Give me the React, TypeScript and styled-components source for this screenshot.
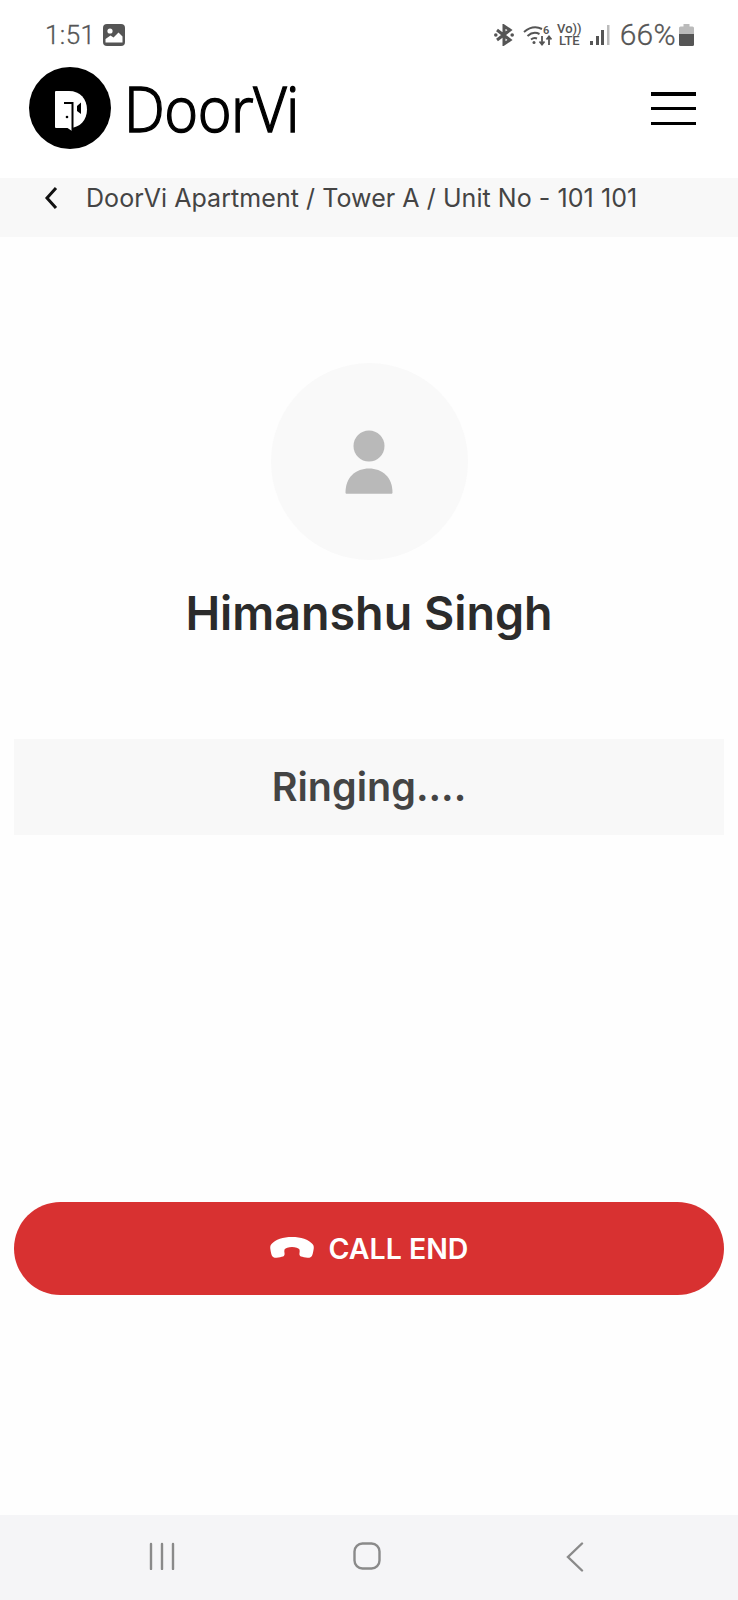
import React from "react";
import styled, { createGlobalStyle } from "styled-components";

const GlobalStyle = createGlobalStyle`
  html, body {
    margin: 0;
    padding: 0;
    background: #fefefe;
  }
  * {
    box-sizing: border-box;
  }
`;

const Screen = styled.div`
  width: 738px;
  height: 1600px;
  display: flex;
  flex-direction: column;
  font-family: Inter, "Liberation Sans", sans-serif;
  background: #fefefe;
`;

const StatusBar = styled.div`
  height: 66px;
  padding: 21px 44px 0 45px;
  display: flex;
  justify-content: space-between;
  align-items: flex-start;
  background: #fff;
  color: #555;
  font-family: Roboto, sans-serif;
`;

const StatusGroup = styled.div`
  display: flex;
  align-items: center;
  height: 28px;
`;

const StatusTime = styled.span`
  font-size: 26px;
  font-weight: 300;
  letter-spacing: 0.4px;
  line-height: 28px;
  margin-right: 8px;
  -webkit-text-stroke: 0.3px #555;
`;

const Battery = styled.span`
  font-size: 30px;
  font-weight: 300;
  line-height: 28px;
  margin: 0 3px 0 10px;
  letter-spacing: 0.3px;
  -webkit-text-stroke: 0.3px #555;
`;

const VoLte = styled.span`
  display: flex;
  flex-direction: column;
  align-items: center;
  margin: 0 8px 0 5px;
  font-size: 13px;
  font-weight: 500;
  line-height: 12px;
  color: #555;
`;

const StatusSpacer = styled.span`
  width: 9px;
`;

const Header = styled.header`
  height: 112px;
  padding: 1px 42px 0 29px;
  display: flex;
  justify-content: space-between;
  align-items: flex-start;
  background: #fff;
`;

const Brand = styled.div`
  display: flex;
  align-items: center;
  gap: 13px;
  height: 82px;
`;

const BrandName = styled.span`
  display: inline-block;
  font-family: "Noto Sans", sans-serif;
  font-size: 63px;
  font-weight: 300;
  line-height: 80px;
  color: #000;
  letter-spacing: -0.5px;
  transform: scaleX(0.91);
  transform-origin: left center;
  -webkit-text-stroke: 1.3px #000;
`;

const MenuButton = styled.button`
  margin-top: 25px;
  padding: 0;
  width: 45px;
  height: 33px;
  border: 0;
  background: none;
  display: flex;
  flex-direction: column;
  justify-content: space-between;
`;

const MenuLine = styled.span`
  display: block;
  height: 3.5px;
  background: #000;
`;

const Breadcrumb = styled.nav`
  height: 59px;
  padding: 3px 0 0 44px;
  display: flex;
  align-items: flex-start;
  gap: 28px;
  background: #f8f8f8;
  color: #444;
  font-size: 25px;
  letter-spacing: 0.06px;
  line-height: 34px;
`;

const BackIcon = styled.svg`
  flex: none;
  margin-top: 5px;
`;

const Main = styled.main`
  flex: 1;
  display: flex;
  flex-direction: column;
  align-items: center;
  padding: 126px 14px 0;
`;

const Avatar = styled.div`
  width: 197px;
  height: 197px;
  border-radius: 50%;
  background: #f9f9f9;
  display: flex;
  align-items: center;
  justify-content: center;
`;

const Name = styled.h1`
  margin: 22px 0 0;
  font-size: 46.6px;
  font-weight: 600;
  line-height: 62px;
  color: #2b2b2b;
`;

const CallStatus = styled.div`
  width: 100%;
  height: 96px;
  margin-top: 95px;
  display: flex;
  align-items: center;
  justify-content: center;
  background: #f8f8f8;
  color: #444;
  font-size: 39.5px;
  font-weight: 600;
`;

const EndButton = styled.button`
  width: 100%;
  height: 93px;
  margin-top: 367px;
  border: 0;
  border-radius: 47px;
  display: flex;
  align-items: center;
  justify-content: center;
  gap: 15px;
  background: #d83131;
  color: #fff;
  font-family: inherit;
  font-size: 28.5px;
  font-weight: 600;
`;

const NavBar = styled.div`
  height: 85px;
  padding: 27px 0 0;
  display: flex;
  justify-content: center;
  align-items: flex-start;
  background: #f5f5f7;
`;

const NavSlot = styled.div<{ $width: number }>`
  width: ${(p) => p.$width}px;
  height: 30px;
  display: flex;
  justify-content: center;
`;

const GalleryIcon = () => (
  <svg width="22" height="22" viewBox="0 0 22 22">
    <rect width="22" height="22" rx="4" fill="#555" />
    <circle cx="7" cy="7" r="2.6" fill="#fff" />
    <path d="M2.5 18.5V15l5-3.5 3 2 5-5 4 4v6z" fill="#fff" />
  </svg>
);

const BluetoothIcon = () => (
  <svg width="20" height="22" viewBox="0 0 20 22" fill="none" stroke="#555" strokeWidth="3">
    <path d="M3 6l13 10-6 4V2l6 4L3 16" />
    <circle cx="1.800" cy="11" r="1.800" fill="#555" stroke="none" />
    <circle cx="18.200" cy="11" r="1.800" fill="#555" stroke="none" />
  </svg>
);

const WifiIcon = () => (
  <svg width="29" height="22" viewBox="0 0 29 22" fill="none" stroke="#555">
    <path d="M1 8c6-5 12-6 18-3" strokeWidth="2" />
    <path d="M4.500 12c4-3.500 8-4 12-2" strokeWidth="2" />
    <path d="M8 15.500c2-1.500 4-1.800 6-1" strokeWidth="2" />
    <circle cx="11" cy="18.500" r="1.500" fill="#555" stroke="none" />
    <path d="M19 12v8M16.500 17.500l2.500 3 2.500-3" strokeWidth="1.800" />
    <path d="M26 21v-8M23.500 15.500l2.500-3 2.500 3" strokeWidth="1.800" />
    <text x="20" y="9.500" fontSize="11" fontWeight="600" fill="#555" stroke="none" fontFamily="Roboto, sans-serif">
      6
    </text>
  </svg>
);

const SignalIcon = () => (
  <svg width="20" height="21" viewBox="0 0 20 21" fill="#555">
    <rect x="0" y="16" width="3" height="4" />
    <rect x="6" y="11" width="3" height="9" />
    <rect x="11" y="5" width="3" height="15" />
    <rect x="17" y="0" width="2.500" height="20" fill="#bbb" />
  </svg>
);

const BatteryIcon = () => (
  <svg width="15" height="22" viewBox="0 0 15 22">
    <path d="M4.500 0h6v2.500h3a1.500 1.500 0 0 1 1.500 1.500v6H0V4a1.500 1.500 0 0 1 1.500-1.500h3z" fill="#bbb" />
    <path d="M0 10h15v10.500a1.500 1.500 0 0 1-1.500 1.500h-12A1.500 1.500 0 0 1 0 20.500z" fill="#555" />
  </svg>
);

const DoorLogo = () => (
  <svg width="82" height="82" viewBox="0 0 82 82">
    <circle cx="41" cy="41" r="41" fill="#000" />
    <path d="M26 25a1 1 0 0 1 1-1h13c11 0 18 8 18 18.500S51 61 40 61H27a1 1 0 0 1-1-1z" fill="#fff" />
    <path d="M34 58l9 6v-6z" fill="#fff" />
    <path d="M35 35h9.500v29H42.500V37H35z" fill="#000" />
    <path d="M52 35.500l-4 3.500v5l4 3z" fill="#000" />
    <circle cx="38" cy="50" r="1.300" fill="#000" />
  </svg>
);

const PersonIcon = () => (
  <svg width="48" height="64" viewBox="0 0 48 64" fill="#b9b9b9">
    <circle cx="24" cy="16" r="15.500" />
    <path d="M0.500 62.500C0.500 47 11 38.500 24 38.500S47.500 47 47.500 62.500c0 0.800-0.500 1.300-1.300 1.300H1.800c-0.800 0-1.300-0.500-1.300-1.300z" />
  </svg>
);

const HangUpIcon = () => (
  <svg width="44" height="23" viewBox="0 0 44 23" fill="#fff">
    <path d="M22 0C13 0 5.500 2.500 1.500 7 0 8.700 0 10.500 0.500 13c0.400 2 0.800 5 2 6.500 1 1.200 2.500 1.500 4 1.300 2.500-0.300 5-0.800 6.500-1.300 1.500-0.600 1.800-2 1.500-3.500-0.200-1.200-0.300-2.500 0-3.500C15.500 11 18.500 10 22 10s6.500 1 7.500 2.500c0.300 1 0.200 2.300 0 3.500-0.300 1.500 0 2.900 1.500 3.500 1.500 0.500 4 1 6.500 1.300 1.500 0.200 3-0.100 4-1.300 1.200-1.500 1.600-4.500 2-6.500 0.500-2.500 0.500-4.300-1-6C38.500 2.500 31 0 22 0z" />
  </svg>
);

const App = () => {
  return (
    <Screen>
      <GlobalStyle />
      <StatusBar>
        <StatusGroup>
          <StatusTime>1:51</StatusTime>
          <GalleryIcon />
        </StatusGroup>
        <StatusGroup>
          <BluetoothIcon />
          <StatusSpacer />
          <WifiIcon />
          <VoLte>
            <span>Vo))</span>
            <span>LTE</span>
          </VoLte>
          <SignalIcon />
          <Battery>66%</Battery>
          <BatteryIcon />
        </StatusGroup>
      </StatusBar>

      <Header>
        <Brand>
          <DoorLogo />
          <BrandName>DoorVi</BrandName>
        </Brand>
        <MenuButton aria-label="menu">
          <MenuLine />
          <MenuLine />
          <MenuLine />
        </MenuButton>
      </Header>

      <Breadcrumb>
        <BackIcon width="14" height="24" viewBox="0 0 14 24" fill="none" stroke="#111" strokeWidth="3">
          <path d="M12 2L3 12l9 10" />
        </BackIcon>
        <span>DoorVi Apartment / Tower A / Unit No - 101 101</span>
      </Breadcrumb>

      <Main>
        <Avatar>
          <PersonIcon />
        </Avatar>
        <Name>Himanshu Singh</Name>
        <CallStatus>Ringing....</CallStatus>
        <EndButton>
          <HangUpIcon />
          CALL END
        </EndButton>
      </Main>

      <NavBar>
        <NavSlot $width={323}>
          <svg width="28" height="28" viewBox="0 0 28 28" stroke="#8a8a8a" strokeWidth="2.400" strokeLinecap="round">
            <path d="M3 2v25M14 2v25M25 2v25" />
          </svg>
        </NavSlot>
        <NavSlot $width={88}>
          <svg width="28" height="28" viewBox="0 0 28 28" fill="none" stroke="#8a8a8a" strokeWidth="2.400">
            <rect x="1.500" y="1.500" width="25" height="25" rx="8" />
          </svg>
        </NavSlot>
        <NavSlot $width={327}>
          <svg width="18" height="30" viewBox="0 0 18 30" fill="none" stroke="#8a8a8a" strokeWidth="2.400" strokeLinecap="round">
            <path d="M16 1.500L2 15l14 13.500" />
          </svg>
        </NavSlot>
      </NavBar>
    </Screen>
  );
};

export default App;
